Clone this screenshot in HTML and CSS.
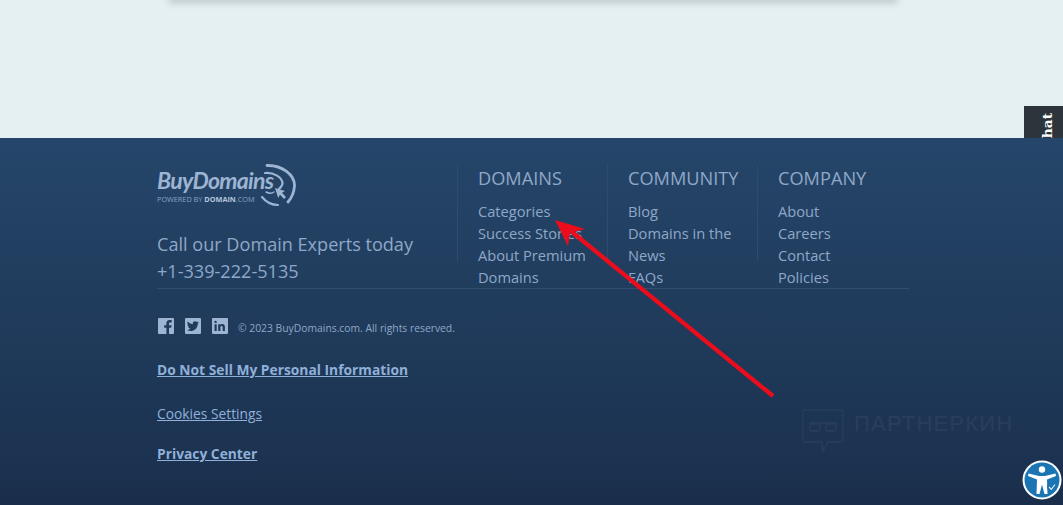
FILE: index.html
```html
<!DOCTYPE html>
<html lang="en">
<head>
<meta charset="utf-8">
<title>BuyDomains footer</title>
<link rel="stylesheet" href="styles.css">
</head>
<body>
<main class="hero">
  <div class="card-shadow"></div>
  <div class="chat-tab"><span class="chat-text">hat</span></div>
</main>
<footer class="footer">
  <div class="footer-inner">
    <div class="top-row">
      <div class="brand">
        <a class="logo" href="#">
          <span class="logo-name">BuyDomains</span>
          <span class="logo-sub">POWERED BY <b>DOMAIN</b>.COM</span>
          <svg class="logo-arcs" viewBox="0 0 46 44" width="46" height="44" aria-hidden="true">
            <g fill="none" stroke="#9db4d2" stroke-linecap="round">
              <path d="M17 1.500 C32 1 45 11 44.500 22 C44 29 41.500 34 38 38" stroke-width="2.800"/>
              <path d="M15 9 C23 8 32 13 32.500 19 C32.700 21 31 23 29 25" stroke-width="2.200"/>
              <path d="M12 33 C16 38 22 41 28 41" stroke-width="2.200"/>
              <path d="M16 28 C19 29.500 22 29.500 24 28" stroke-width="1.400"/>
            </g>
            <path d="M25 24 L35 27 L32 28.800 L36 33 L34 35 L30 30.800 L28.200 34 Z" fill="#9db4d2"/>
          </svg>
        </a>
        <p class="call">Call our Domain Experts today<br>+1-339-222-5135</p>
      </div>
      <nav class="col">
        <h3 class="col-title">DOMAINS</h3>
        <a class="col-link" href="#">Categories</a>
        <a class="col-link" href="#">Success Stories</a>
        <a class="col-link" href="#">About Premium Domains</a>
      </nav>
      <nav class="col">
        <h3 class="col-title">COMMUNITY</h3>
        <a class="col-link" href="#">Blog</a>
        <a class="col-link" href="#">Domains in the News</a>
        <a class="col-link" href="#">FAQs</a>
      </nav>
      <nav class="col">
        <h3 class="col-title">COMPANY</h3>
        <a class="col-link" href="#">About</a>
        <a class="col-link" href="#">Careers</a>
        <a class="col-link" href="#">Contact</a>
        <a class="col-link" href="#">Policies</a>
      </nav>
    </div>
    <div class="legal-row">
      <div class="socials">
        <svg class="social" viewBox="0 0 18 18" aria-label="Facebook"><path fill="#9db4d2" fill-rule="evenodd" d="M2 1h14a1 1 0 0 1 1 1v14a1 1 0 0 1-1 1h-4v-6.300h2.200l.4-2.500H12V6.600c0-.8.3-1.200 1.200-1.200h1.500V3.100c-.5-.1-1.200-.2-2-.2-2 0-3.300 1.200-3.300 3.400v1.900H7.200v2.500h2.200V17H2a1 1 0 0 1-1-1V2a1 1 0 0 1 1-1z"/></svg>
        <svg class="social" viewBox="0 0 18 18" aria-label="Twitter"><path fill="#9db4d2" fill-rule="evenodd" d="M2 1h14a1 1 0 0 1 1 1v14a1 1 0 0 1-1 1H2a1 1 0 0 1-1-1V2a1 1 0 0 1 1-1zm12.800 4.200c-.5.200-.9.300-1.400.4.500-.3.900-.8 1.100-1.300-.5.300-1 .5-1.600.6a2.500 2.500 0 0 0-4.200 2.300C6.700 7.100 4.900 6.100 3.700 4.600c-.7 1.100-.3 2.500.8 3.300-.4 0-.8-.1-1.100-.3 0 1.200.9 2.200 2 2.500-.4.100-.8.100-1.100 0 .3 1 1.200 1.700 2.300 1.700-1.100.9-2.400 1.200-3.700 1.100 3.800 2.400 10.500.9 10.900-6.200.5-.4.800-.9 1-1.500z"/></svg>
        <svg class="social" viewBox="0 0 18 18" aria-label="LinkedIn"><path fill="#9db4d2" fill-rule="evenodd" d="M2 1h14a1 1 0 0 1 1 1v14a1 1 0 0 1-1 1H2a1 1 0 0 1-1-1V2a1 1 0 0 1 1-1zm1.500 6.200V14h2.200V7.200H3.500zM4.600 3.700a1.200 1.200 0 1 0 0 2.400 1.200 1.200 0 0 0 0-2.400zM7.200 7.200V14h2.200v-3.600c0-1 .4-1.500 1.200-1.500s1.100.6 1.100 1.500V14h2.200V9.900c0-1.900-1-2.900-2.500-2.900-1 0-1.700.5-2 1.100V7.200H7.200z"/></svg>
      </div>
      <span class="copyright">© 2023 BuyDomains.com. All rights reserved.</span>
    </div>
    <a class="legal-link strong first" href="#">Do Not Sell My Personal Information</a>
    <a class="legal-link second" href="#">Cookies Settings</a>
    <a class="legal-link strong third" href="#">Privacy Center</a>
  </div>

  <div class="watermark">
    <svg class="wm-icon" viewBox="0 0 42 44" width="42" height="44" aria-hidden="true">
      <path d="M3 1h36a2 2 0 0 1 2 2v28a2 2 0 0 1-2 2H26l-5 9-1-9H3a2 2 0 0 1-2-2V3a2 2 0 0 1 2-2z" fill="none" stroke="#2a3e5b" stroke-width="1.300"/>
      <path d="M7 14h28M8 15h10v5a2 2 0 0 1-2 2h-6a2 2 0 0 1-2-2zM24 15h10v5a2 2 0 0 1-2 2h-6a2 2 0 0 1-2-2z" fill="none" stroke="#2a3e5b" stroke-width="1.300"/>
    </svg>
    <span class="wm-text">ПАРТНЕРКИН</span>
  </div>

  <svg class="a11y" viewBox="0 0 40 40" width="40" height="40" aria-label="Accessibility">
    <circle cx="20" cy="20" r="19.500" fill="#fff"/>
    <circle cx="20" cy="20" r="17.500" fill="#1b75b3"/>
    <circle cx="20" cy="9.500" r="3.200" fill="#fff"/>
    <path d="M6.500 13.500 L17 16 H23 L33.500 13.500 L34 16 L25 19.500 L25.500 34 H22.500 L20 24.500 L17.500 34 H14.500 L15 19.500 L6 16 Z" fill="#fff"/>
    <circle cx="30" cy="27" r="5" fill="#1b75b3"/>
    <path d="M27 27 L29.300 29.300 L33 24.500" fill="none" stroke="#dfeaf3" stroke-width="1.200"/>
  </svg>
</footer>
<svg class="arrow" viewBox="0 0 1063 505" width="1063" height="505" aria-hidden="true">
  <path d="M773 396 L572 232" stroke="#ec0d1c" stroke-width="4.300" fill="none"/>
  <path d="M555 220 L585 229 L570 233 L568 246 Z" fill="#ec0d1c"/>
</svg>
</body>
</html>
```
FILE: styles.css
```css
* {
  box-sizing: border-box;
}

html, body {
  margin: 0;
  padding: 0;
}

body {
  position: relative;
  height: 505px;
  overflow: hidden;
  font-family: "Open Sans", "Liberation Sans", sans-serif;
  background: #e4f0f2;
}

.hero {
  position: relative;
  height: 138px;
  overflow: hidden;
  background: #e4f0f2;
}

.card-shadow {
  width: 726px;
  height: 0;
  margin-left: 170px;
  box-shadow: 0 0 7px 1px rgba(60, 65, 70, 0.72);
}

.chat-tab {
  position: absolute;
  right: 0;
  top: 106px;
  width: 39px;
  height: 32px;
  background: #2e343b;
}

.chat-text {
  position: absolute;
  left: 16px;
  top: 7px;
  color: #fff;
  font-family: "DejaVu Serif", "Liberation Serif", serif;
  font-size: 13.800px;
  font-weight: 700;
  line-height: 15px;
  writing-mode: vertical-rl;
  transform: rotate(180deg);
}

.footer {
  position: relative;
  height: 367px;
  overflow: hidden;
  background: linear-gradient(#25466a 0%, #1c3351 85%, #1a2e4b 100%);
  color: #8fa8c8;
}

.footer-inner {
  display: flex;
  flex-direction: column;
  align-items: flex-start;
  width: 752px;
  margin-left: 157px;
  padding-top: 27px;
}

.top-row {
  display: flex;
  width: 100%;
  height: 124px;
  border-bottom: 1px solid #31506f;
}

.brand {
  width: 300px;
  flex: none;
}

.logo {
  position: relative;
  display: block;
  width: 139px;
  height: 44px;
  color: #9db4d2;
  text-decoration: none;
}

.logo-name {
  display: block;
  padding-top: 1px;
  font-family: Lato, "Open Sans", sans-serif;
  font-size: 23px;
  font-weight: 700;
  font-style: italic;
  line-height: 28px;
  letter-spacing: -0.7px;
}

.logo-sub {
  display: block;
  margin-top: 0;
  font-size: 7.300px;
  line-height: 10px;
  color: #8aa2c2;
}

.logo-sub b {
  color: #b4c6de;
}

.logo-arcs {
  position: absolute;
  left: 93px;
  top: -1px;
}

.call {
  margin: 22px 0 0;
  font-size: 18.100px;
  line-height: 27px;
  color: #8fa8c8;
}

.col {
  display: block;
  flex: none;
  width: 150px;
  height: 96px;
  padding-left: 20px;
  border-left: 1px solid #2e4d6e;
}

.col-title {
  margin: -1px 0 8px;
  font-size: 18.200px;
  font-weight: 400;
  line-height: 28px;
  color: #8fa8c8;
}

.col-link {
  display: block;
  max-width: 116px;
  font-size: 14.650px;
  line-height: 22px;
  color: #8fa8c8;
  text-decoration: none;
}

.legal-row {
  display: flex;
  align-items: center;
  margin-top: 27px;
  height: 20px;
}

.socials {
  display: flex;
  gap: 9px;
  margin-right: 9px;
}

.social {
  display: block;
  width: 18px;
  height: 18px;
}

.copyright {
  position: relative;
  top: 2px;
  font-size: 10.330px;
  color: #8fa8c8;
}

.legal-link {
  display: block;
  font-size: 13.800px;
  line-height: 20px;
  color: #8fb0d8;
  text-decoration: underline;
}

.legal-link.strong {
  font-weight: 700;
}

.legal-link.first {
  margin-top: 24px;
}

.legal-link.second {
  margin-top: 24px;
}

.legal-link.third {
  margin-top: 20px;
}

.watermark {
  position: absolute;
  left: 802px;
  top: 271px;
  display: flex;
  align-items: flex-start;
  gap: 10px;
}

.wm-text {
  margin-top: 2px;
  font-family: "Liberation Sans", sans-serif;
  font-size: 22px;
  line-height: 26px;
  letter-spacing: 1.200px;
  color: #2a3e5b;
}

.a11y {
  position: absolute;
  left: 1022px;
  top: 322px;
}

.arrow {
  position: absolute;
  left: 0;
  top: 0;
  pointer-events: none;
}
```
